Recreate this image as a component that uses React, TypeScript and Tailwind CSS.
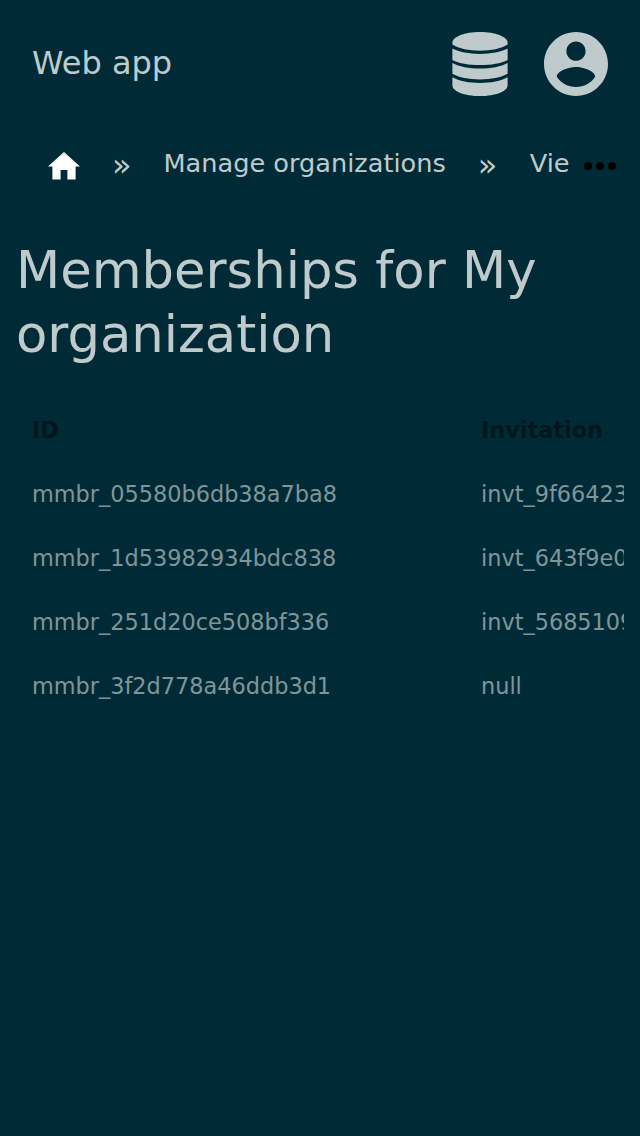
const rows = [
  ["mmbr_05580b6db38a7ba8", "invt_9f6642302ba1"],
  ["mmbr_1d53982934bdc838", "invt_643f9e0b2c51"],
  ["mmbr_251d20ce508bf336", "invt_568510917ad3"],
  ["mmbr_3f2d778a46ddb3d1", "null"],
];

function DatabaseIcon() {
  return (
    <svg viewBox="0 0 56 64" className="h-16 w-14" fill="currentColor">
      <path d="M.4 10.6C.4 4.800 12.600 0 28 0s27.600 4.800 27.600 10.600v2C49 16.800 39 18.800 28 18.800S7 16.800 .4 12.600z" />
      <path d="M.4 16.500C7 20 17 21.900 28 21.900S49 20 55.600 16.500V27.900C49 31.400 39 33 28 33S7 31.400 .4 27.900z" />
      <path d="M.4 31.100C7 34.800 17 36.600 28 36.600S49 34.800 55.600 31.100V41.800C49 45.700 39 47.400 28 47.400S7 45.700 .4 41.800z" />
      <path d="M.4 45.200C7 49.100 17 50.900 28 50.900S49 49.100 55.600 45.200v8.200C55.600 59.200 43.400 64 28 64S.4 59.200 .4 53.400z" />
    </svg>
  );
}

function AccountIcon() {
  return (
    <svg viewBox="2 2 20 20" className="size-16" fill="currentColor">
      <path d="M12 2C6.480 2 2 6.480 2 12s4.480 10 10 10 10-4.480 10-10S17.520 2 12 2zm0 3c1.660 0 3 1.340 3 3s-1.340 3-3 3-3-1.340-3-3 1.340-3 3-3zm0 14.200c-2.500 0-4.710-1.280-6-3.220.03-1.990 4-3.080 6-3.080 1.990 0 5.970 1.090 6 3.080-1.290 1.940-3.500 3.220-6 3.220z" />
    </svg>
  );
}

function HomeIcon() {
  return (
    <svg viewBox="0 0 32 32" className="size-8 shrink-0 text-white" fill="currentColor">
      <path d="M16 1.100 32 15.400H27.600V28.600H19.400V19H12.600V28.600H4.400V15.400H0z" />
    </svg>
  );
}

function MoreIcon() {
  return (
    <svg viewBox="0 0 32 8" className="mt-1 ml-[15.500px] h-2 w-8 shrink-0 text-black" fill="currentColor">
      <circle cx="4" cy="4" r="4" />
      <circle cx="16" cy="4" r="4" />
      <circle cx="28" cy="4" r="4" />
    </svg>
  );
}

function Separator() {
  return <span className="mt-0.5 ml-8 w-5 shrink-0 text-[32px] leading-8">»</span>;
}

export default function App() {
  return (
    <div className="h-[1136px] w-[640px] overflow-hidden bg-[#002b36] font-['DejaVu_Sans',sans-serif] text-[#bfcacd]">
      <header className="flex h-32 items-center justify-between px-8">
        <span className="pb-0.5 text-[32px] leading-[48px]">Web app</span>
        <div className="flex items-center gap-9">
          <DatabaseIcon />
          <AccountIcon />
        </div>
      </header>
      <nav className="flex h-[72px] items-center pl-12 text-[25.6px] leading-10">
        <div className="mt-[6px] flex">
          <HomeIcon />
        </div>
        <Separator />
        <span className="ml-[31.500px] pb-0.5 whitespace-nowrap">Manage organizations</span>
        <Separator />
        <span className="ml-8 w-[39px] overflow-hidden pb-0.5 whitespace-nowrap">View</span>
        <MoreIcon />
      </nav>
      <h1 className="mt-[38px] px-4 text-[51.2px] leading-[64px]">Memberships for My organization</h1>
      <div className="mx-4 mt-8 overflow-hidden text-[22.4px] leading-[32px] text-[#80959a]">
        <table className="w-[900px] table-fixed text-left">
          <thead>
            <tr className="h-16 text-[#00161c]">
              <th className="w-[449px] px-4">ID</th>
              <th className="px-4">Invitation</th>
            </tr>
          </thead>
          <tbody>
            {rows.map(([id, invitation]) => (
              <tr key={id} className="h-16">
                <td className="px-4">{id}</td>
                <td className="px-4">{invitation}</td>
              </tr>
            ))}
          </tbody>
        </table>
      </div>
    </div>
  );
}
